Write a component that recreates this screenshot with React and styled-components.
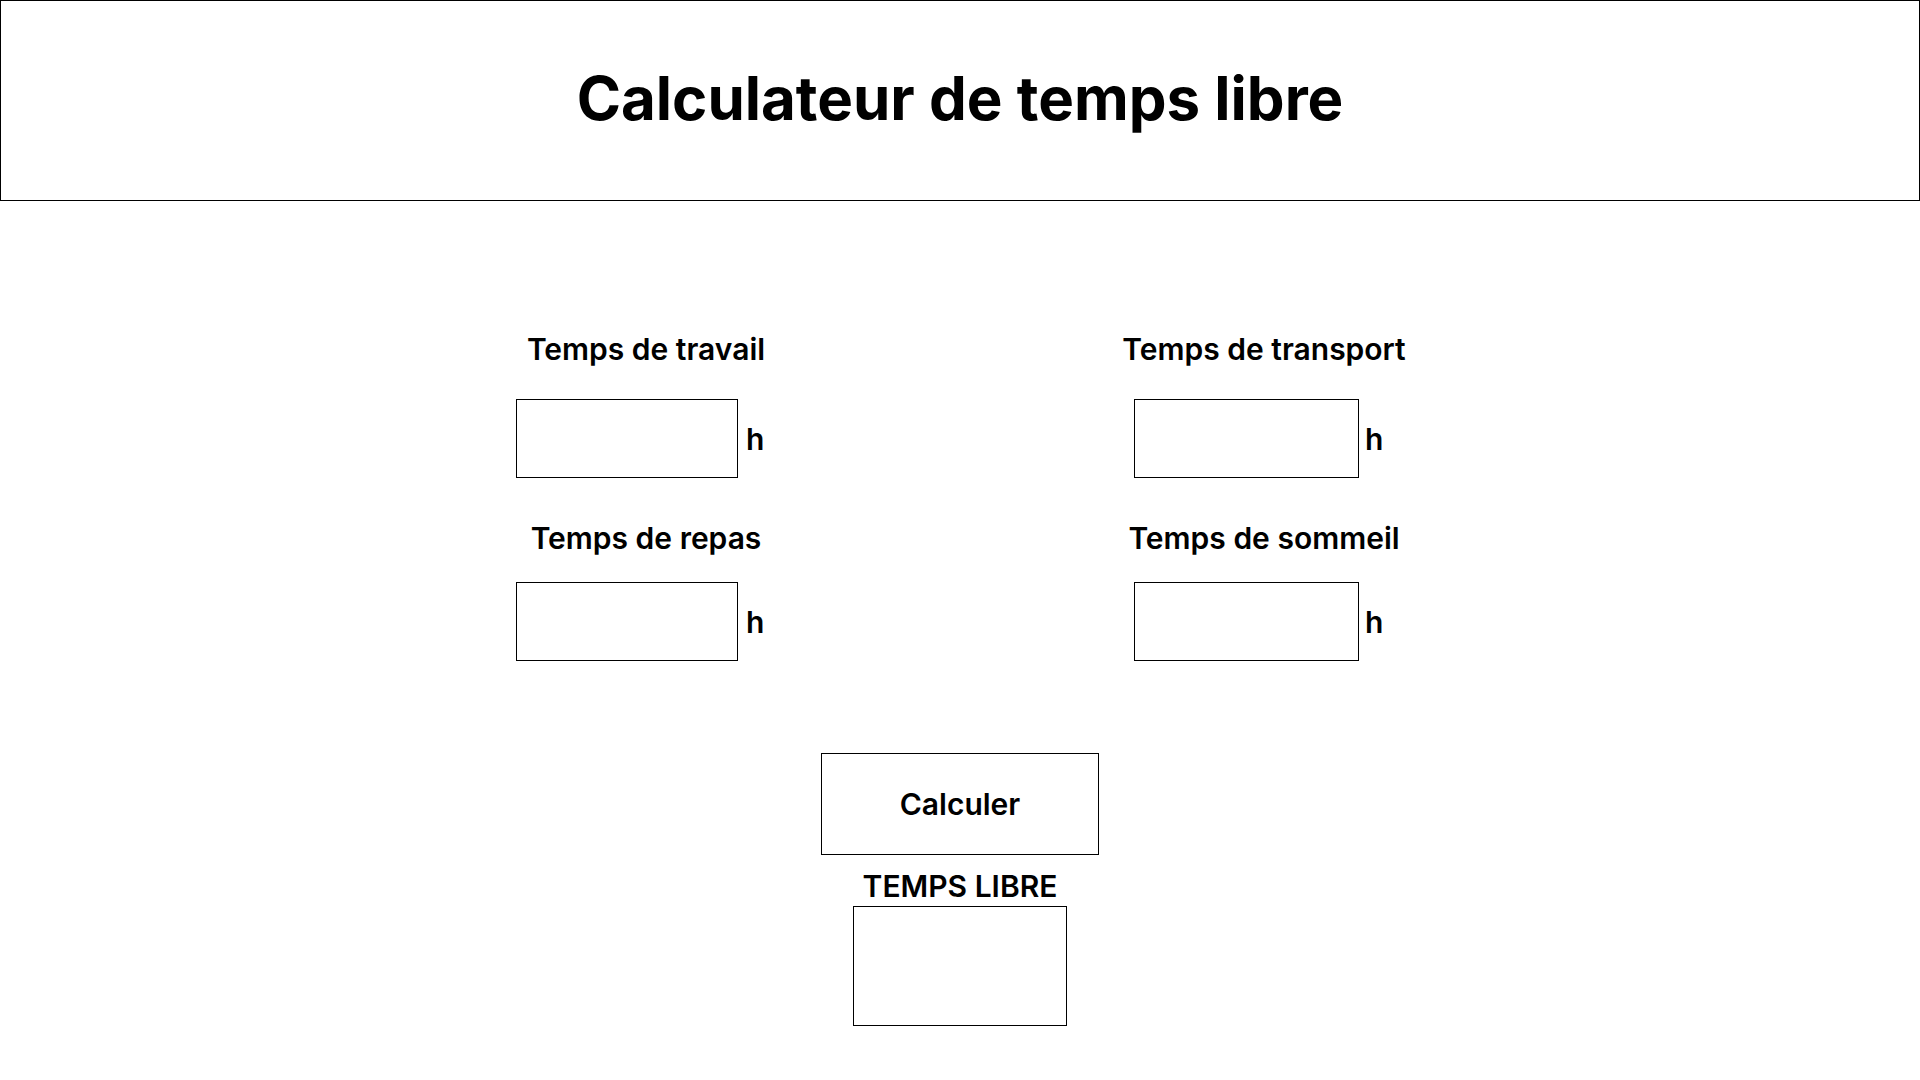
import React, { useState } from "react";
import styled, { createGlobalStyle } from "styled-components";

const GlobalStyle = createGlobalStyle`
  *, *::before, *::after { box-sizing: border-box; }
  body {
    margin: 0;
    background: #fff;
    color: #000;
    font-family: Inter, "Liberation Sans", sans-serif;
    font-optical-sizing: none;
  }
  input, button { font: inherit; font-optical-sizing: none; color: inherit; }
`;

const Header = styled.header`
  display: flex;
  align-items: center;
  justify-content: center;
  padding: 59px 24px 64px;
  border: 1px solid #000;
`;

const Title = styled.h1`
  margin: 0;
  font-size: 60px;
  line-height: 76px;
  font-weight: 700;
`;

const Form = styled.form`
  display: flex;
  flex-direction: column;
  align-items: center;
  padding: 128px 24px 54px;
  font-size: 30px;
  line-height: 40px;
  font-weight: 600;
`;

const Fields = styled.div`
  display: grid;
  grid-template-columns: 260px 260px;
  column-gap: 358px;
  row-gap: 40px;
  padding-right: 10px;
`;

const Field = styled.div`
  display: flex;
  flex-direction: column;
  align-items: center;
  gap: ${(p) => p.$gap}px;
`;

const Label = styled.label`
  white-space: nowrap;
`;

const Entry = styled.div`
  display: flex;
  align-items: center;
  align-self: stretch;
  gap: ${(p) => p.$gap}px;
`;

const HoursInput = styled.input`
  width: ${(p) => p.$width}px;
  height: 79px;
  padding: 0 16px;
  border: 1px solid #000;
  border-radius: 0;
  background: #fff;
`;

const Submit = styled.button`
  width: 278px;
  height: 102px;
  margin-top: 92px;
  border: 1px solid #000;
  background: #fff;
  cursor: pointer;
`;

const ResultLabel = styled.label`
  margin-top: 11px;
`;

const Result = styled.input`
  width: 214px;
  height: 120px;
  border: 1px solid #000;
  border-radius: 0;
  background: #fff;
  text-align: center;
`;

const FIELDS = [
  { id: "travail", label: "Temps de travail", width: 222, unitGap: 8, labelGap: 30 },
  { id: "transport", label: "Temps de transport", width: 225, unitGap: 6, labelGap: 30 },
  { id: "repas", label: "Temps de repas", width: 222, unitGap: 8, labelGap: 24 },
  { id: "sommeil", label: "Temps de sommeil", width: 225, unitGap: 6, labelGap: 24 },
];

export default function App() {
  const [hours, setHours] = useState({});
  const [free, setFree] = useState("");
  const calculate = (e) => {
    e.preventDefault();
    const used = FIELDS.reduce((sum, f) => sum + (Number(hours[f.id]) || 0), 0);
    setFree(String(24 - used));
  };
  return (
    <>
      <GlobalStyle />
      <Header>
        <Title>Calculateur de temps libre</Title>
      </Header>
      <Form onSubmit={calculate}>
        <Fields>
          {FIELDS.map((f) => (
            <Field key={f.id} $gap={f.labelGap}>
              <Label htmlFor={f.id}>{f.label}</Label>
              <Entry $gap={f.unitGap}>
                <HoursInput
                  id={f.id}
                  $width={f.width}
                  inputMode="decimal"
                  value={hours[f.id] ?? ""}
                  onChange={(e) => setHours({ ...hours, [f.id]: e.target.value })}
                />
                <span>h</span>
              </Entry>
            </Field>
          ))}
        </Fields>
        <Submit type="submit">Calculer</Submit>
        <ResultLabel htmlFor="libre">TEMPS LIBRE</ResultLabel>
        <Result id="libre" readOnly value={free} />
      </Form>
    </>
  );
}
